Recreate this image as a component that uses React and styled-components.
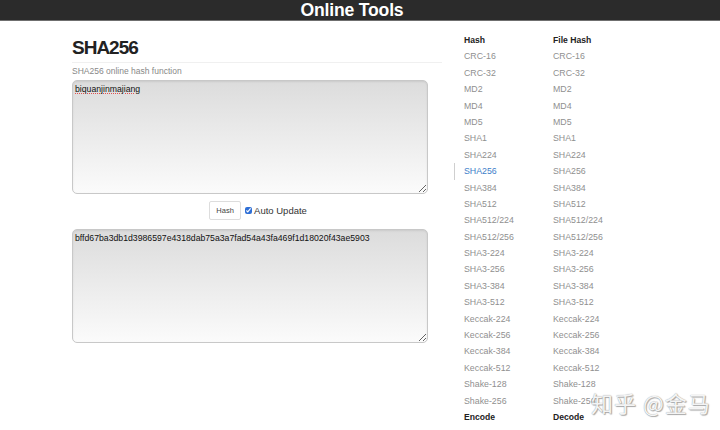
import React from "react";
import styled, { createGlobalStyle } from "styled-components";

const GlobalStyle = createGlobalStyle`
  body {
    margin: 0;
    background: #fff;
    font-family: "Liberation Sans", Arial, sans-serif;
  }
`;

const hashes = [
  "CRC-16",
  "CRC-32",
  "MD2",
  "MD4",
  "MD5",
  "SHA1",
  "SHA224",
  "SHA256",
  "SHA384",
  "SHA512",
  "SHA512/224",
  "SHA512/256",
  "SHA3-224",
  "SHA3-256",
  "SHA3-384",
  "SHA3-512",
  "Keccak-224",
  "Keccak-256",
  "Keccak-384",
  "Keccak-512",
  "Shake-128",
  "Shake-256",
];

function App() {
  return (
    <Page>
      <GlobalStyle />
      <Header>Online Tools</Header>
      <Main>
        <Content>
          <Title>SHA256</Title>
          <Subtitle>SHA256 online hash function</Subtitle>
          <Area defaultValue="biquanjinmajiang" $spell />
          <Controls>
            <HashButton>Hash</HashButton>
            <Check type="checkbox" defaultChecked />
            <CheckLabel>Auto Update</CheckLabel>
          </Controls>
          <Area defaultValue="bffd67ba3db1d3986597e4318dab75a3a7fad54a43fa469f1d18020f43ae5903" />
        </Content>
        <Sidebar>
          <Column>
            <Heading>Hash</Heading>
            {hashes.map((h) => (
              <Item key={h} $active={h === "SHA256"}>
                {h}
              </Item>
            ))}
            <Heading>Encode</Heading>
          </Column>
          <Column>
            <Heading>File Hash</Heading>
            {hashes.map((h) => (
              <Item key={h}>{h}</Item>
            ))}
            <Heading>Decode</Heading>
          </Column>
        </Sidebar>
      </Main>
      <Watermark>知乎 @金马</Watermark>
    </Page>
  );
}

const Page = styled.div`
  position: relative;
  width: 720px;
  height: 430px;
  overflow: hidden;
`;

const Header = styled.header`
  height: 20px;
  background: #2b2b2b;
  border-bottom: 1px solid #6f6f6f;
  color: #fff;
  font-weight: bold;
  font-size: 17.6px;
  line-height: 21px;
  text-align: center;
  padding-right: 16px;
  letter-spacing: -0.2px;
`;

const Main = styled.main`
  display: grid;
  grid-template-columns: 370px 1fr;
  gap: 12px;
  padding-left: 72px;
`;

const Content = styled.section`
  display: flex;
  flex-direction: column;
  padding-top: 15px;
`;

const Title = styled.h1`
  margin: 0;
  font-size: 19px;
  letter-spacing: -1px;
  line-height: 24px;
  color: #222;
  padding-bottom: 2px;
  border-bottom: 1px solid #f0f0f0;
`;

const Subtitle = styled.p`
  margin: 3px 0 0;
  font-size: 8.5px;
  color: #888;
  line-height: 10px;
`;

const Area = styled.textarea`
  box-sizing: border-box;
  width: 356px;
  height: 114px;
  margin-top: 4px;
  padding: 3px 2px;
  border: 1px solid #c8c8c8;
  border-radius: 5px;
  background: linear-gradient(to bottom, #dcdcdc, #fbfbfb);
  font-family: "Liberation Sans", Arial, sans-serif;
  font-size: 8.7px;
  color: #111;
  resize: vertical;
  outline: none;
  box-shadow: inset 0 1px 2px rgba(0, 0, 0, 0.08);
  text-decoration: ${(p) => (p.$spell ? "underline dotted #e05050" : "none")};
`;

const Controls = styled.div`
  display: flex;
  align-items: center;
  justify-content: center;
  width: 356px;
  margin: 7px 0 5px;
  padding-left: 16px;
  box-sizing: border-box;
`;

const HashButton = styled.button`
  height: 19px;
  width: 32px;
  padding: 0;
  border: 1px solid #ddd;
  border-radius: 2px;
  background: #fff;
  font-family: "Liberation Sans", Arial, sans-serif;
  font-size: 7.5px;
  color: #444;
`;

const Check = styled.input`
  width: 7px;
  height: 7px;
  margin: 0 2px 0 4px;
  accent-color: #2f6fd6;
`;

const CheckLabel = styled.span`
  font-size: 9.5px;
  color: #333;
`;

const Sidebar = styled.aside`
  display: grid;
  grid-template-columns: 89px 89px;
  padding-top: 11px;
`;

const Column = styled.ul`
  margin: 0;
  padding: 0;
  list-style: none;
  & li {
    padding-left: 9px;
  }
  & li[data-active="true"] {
    border-left: 1px solid #cfcfcf;
  }
`;

const Heading = styled.li`
  font-weight: bold;
  font-size: 8.6px;
  color: #222;
  line-height: 16.4px;
  height: 16.4px;
  border-left: 1px solid transparent;
`;

const Item = styled.li.attrs((p) => ({ "data-active": p.$active ? "true" : "false" }))`
  font-size: 8.8px;
  line-height: 16.4px;
  height: 16.4px;
  color: ${(p) => (p.$active ? "#3d7ec9" : "#8f8f8f")};
  border-left: 1px solid transparent;
`;

const Watermark = styled.div`
  position: absolute;
  left: 591px;
  top: 386px;
  font-family: "Noto Sans CJK SC", sans-serif;
  font-size: 22px;
  color: rgba(255, 255, 255, 0.92);
  text-shadow: 0 0 1px #888, 1px 1px 1px #aaa;
  letter-spacing: 1px;
`;

export default App;
